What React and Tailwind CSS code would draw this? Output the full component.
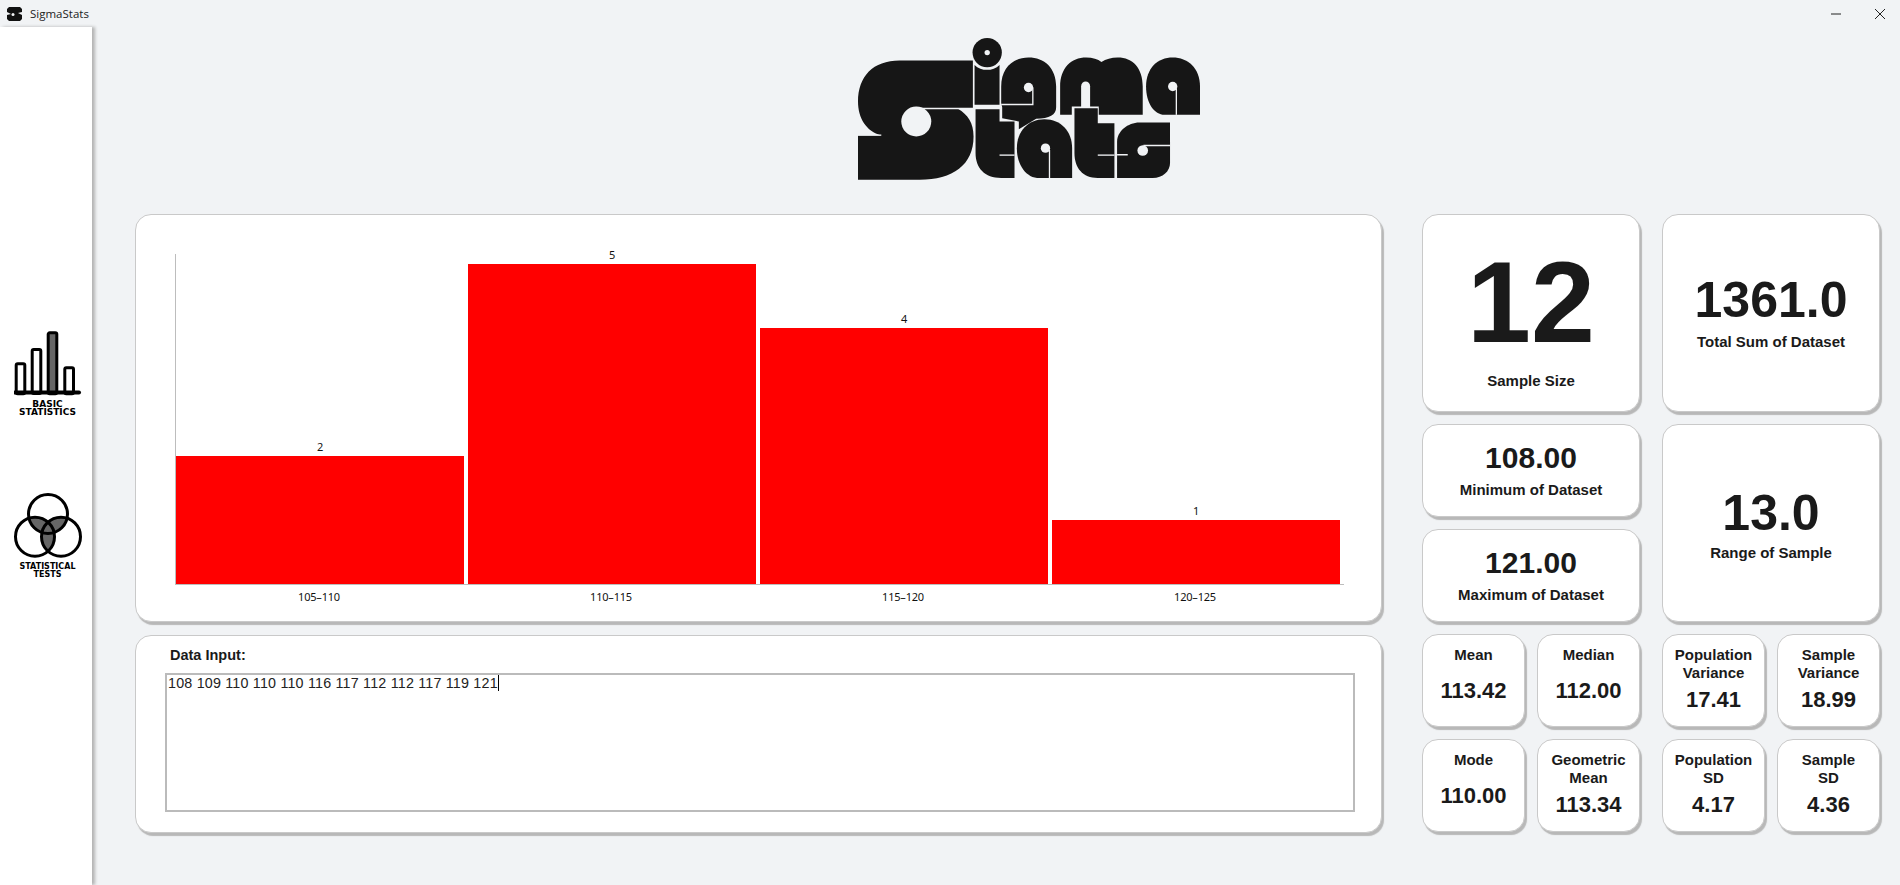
const bins = [
  { range: "105–110", count: 2 },
  { range: "110–115", count: 5 },
  { range: "115–120", count: 4 },
  { range: "120–125", count: 1 },
];
const UNIT = 64;

function Logo() {
  const ink = "#161616";
  const bg = "#f1f3f5";
  return (
    <svg viewBox="115 52 1027 428" width="342" height="143" className="block">
      {/* S */}
      <path fill={ink} d="M460 122H240C160 122 115 170 115 245C115 295 140 335 185 347H115V480H300C400 480 462 435 462 350C462 310 445 285 415 267H460Z" />
      <circle cx="290" cy="305" r="45" fill={bg} />
      <path stroke={bg} strokeWidth="4" fill="none" d="M115 346H185M300 266H462" />
      {/* i */}
      <path fill={ink} d="M465 135C485 155 520 155 540 135V255H465Z" />
      <circle cx="503" cy="98" r="44" fill={ink} />
      <circle cx="503" cy="98" r="8" fill={bg} />
      {/* g */}
      <path fill={ink} d="M545 200C545 145 580 113 627 113C675 113 710 145 710 200V262C710 285 690 295 650 297L598 328V305L548 295V262L545 250Z" />
      <circle cx="627" cy="203" r="14" fill={bg} />
      <path stroke={bg} strokeWidth="4" fill="none" d="M640 203V254H545" />
      {/* m */}
      <path fill={ink} d="M722 285V200C722 145 755 113 800 113C820 113 835 118 846 126C860 118 875 113 895 113C940 113 970 145 970 200V285H838V260H757V285Z" />
      <path fill={bg} d="M785 262V199C785 180 812 180 812 199V262Z" />
      {/* a */}
      <path fill={ink} d="M980 200C980 145 1015 113 1060 113C1105 113 1142 145 1142 200V285H1035C1005 285 980 250 980 200Z" />
      <circle cx="1060" cy="200" r="14" fill={bg} />
      <path stroke={bg} strokeWidth="4" fill="none" d="M1071 205V285" />
      {/* t */}
      <path fill={ink} d="M468 268H540V305H585V475H545C495 475 468 445 468 400Z" />
      <path stroke={bg} strokeWidth="4" fill="none" d="M540 406H585" />
      {/* a */}
      <path fill={ink} d="M592 385C592 335 625 298 675 298C725 298 758 335 758 385V475H660C620 475 592 435 592 385Z" />
      <circle cx="678" cy="385" r="14" fill={bg} />
      <path stroke={bg} strokeWidth="4" fill="none" d="M690 390V475" />
      {/* t */}
      <path fill={ink} d="M765 265H835V310H885V475H835C790 475 765 445 765 400Z" />
      <path stroke={bg} strokeWidth="4" fill="none" d="M835 406H885" />
      {/* s */}
      <path fill={ink} d="M893 365C893 335 925 308 960 308H1052V430C1052 455 1030 475 1000 475H893Z" />
      <circle cx="970" cy="392" r="16" fill={bg} />
      <path stroke={bg} strokeWidth="4" fill="none" d="M972 377H1052M893 405H925" />
    </svg>
  );
}

function BarsIcon() {
  return (
    <svg width="68" height="66" viewBox="0 0 68 66" fill="none" stroke="#000" strokeWidth="3">
      <rect x="2.2" y="33.8" width="8.6" height="30" rx="1.5" fill="#fff" />
      <rect x="18.2" y="19.5" width="8.6" height="44" rx="1.5" fill="#fff" />
      <rect x="34.2" y="2.8" width="8.6" height="61" rx="1.5" fill="#666" />
      <rect x="50.8" y="37.8" width="8.7" height="26" rx="1.5" fill="#fff" />
      <path d="M1 62.5H65" strokeWidth="4" strokeLinecap="round" />
    </svg>
  );
}

function VennIcon() {
  return (
    <svg width="68" height="66" viewBox="0 0 68 66" fill="none" stroke="#000" strokeWidth="3">
      <defs>
        <clipPath id="top"><circle cx="34" cy="21" r="19.5" /></clipPath>
        <clipPath id="left"><circle cx="21" cy="43.7" r="19.5" /></clipPath>
      </defs>
      <g stroke="none" fill="#666">
        <circle cx="21" cy="43.7" r="19.5" clipPath="url(#top)" />
        <circle cx="47" cy="43.7" r="19.5" clipPath="url(#top)" />
        <circle cx="47" cy="43.7" r="19.5" clipPath="url(#left)" />
      </g>
      <circle cx="34" cy="21" r="19.5" />
      <circle cx="21" cy="43.7" r="19.5" />
      <circle cx="47" cy="43.7" r="19.5" />
    </svg>
  );
}

function SideButton({ icon, lines, size }) {
  return (
    <button className="flex flex-col items-center">
      {icon}
      <span className={`${size} mt-[4px] leading-[8px] font-bold text-black font-['DejaVu_Sans',sans-serif] text-center`}>
        {lines.map((l) => (
          <span key={l} className="block">{l}</span>
        ))}
      </span>
    </button>
  );
}

const card = "bg-white border border-[#c9c9c9] rounded-[16px] shadow-[2px_3px_1px_#b8b8b8]";

function StatCard({ value, label, valueClass, className = "h-[93px]", gap = "mt-[8px]" }) {
  return (
    <div className={`${card} ${className} flex flex-col items-center justify-center`}>
      <div className={`${valueClass} font-bold leading-none`}>{value}</div>
      <div className={`${gap} text-[15px] leading-[18px] font-bold`}>{label}</div>
    </div>
  );
}

function SmallCard({ label, value }) {
  const twoLines = Array.isArray(label);
  return (
    <div className={`${card} h-[93px] w-[103px] flex flex-col items-center pt-[11px]`}>
      <div className="text-[15px] leading-[18px] font-bold text-center">
        {twoLines ? label.map((l) => <div key={l}>{l}</div>) : label}
      </div>
      <div className={`${twoLines ? "mt-[5px]" : "mt-[14px]"} text-[22px] leading-[26px] font-bold`}>{value}</div>
    </div>
  );
}

export default function App() {
  return (
    <div className="h-screen overflow-hidden bg-[#f1f3f5] text-[#1a1a1a] font-['Liberation_Sans',Arial,sans-serif] flex flex-col">
      {/* Title bar */}
      <div className="h-[27px] shrink-0 flex items-center pl-[7px] pr-[15px]">
        <svg width="15" height="14" viewBox="0 0 15 14">
          <path d="M2 0H13L15 2V5L11 6L15 8V12L13 14H2L0 12V8L4 7L0 5V2Z" fill="#111" />
          <circle cx="6" cy="7.5" r="1.5" fill="#f1f3f5" />
        </svg>
        <span className="ml-[8px] text-[11.5px] font-['Open_Sans',sans-serif] text-[#222]">SigmaStats</span>
        <div className="ml-auto flex items-center gap-[34px]">
          <svg width="10" height="10" viewBox="0 0 10 10"><path d="M0 5H10" stroke="#222" strokeWidth="1" /></svg>
          <svg width="10" height="10" viewBox="0 0 10 10"><path d="M0 0L10 10M10 0L0 10" stroke="#222" strokeWidth="1" /></svg>
        </div>
      </div>

      <div className="flex-1 flex min-h-0">
        {/* Sidebar */}
        <aside className="w-[92px] shrink-0 bg-white shadow-[3px_0_3px_#b4b4b4] flex flex-col items-center justify-center gap-[77px] pb-[3px] pl-[3px]">
          <SideButton icon={<BarsIcon />} lines={["BASIC", "STATISTICS"]} size="text-[9px]" />
          <SideButton icon={<VennIcon />} lines={["STATISTICAL", "TESTS"]} size="text-[8px]" />
        </aside>

        <main className="flex-1 pl-[43px] pr-[20px]">
          <div className="flex justify-center pl-[43px] pt-[10px] mb-[34px]">
            <Logo />
          </div>

          <div className="flex gap-[40px]">
            {/* Left column */}
            <div className="w-[1247px] flex flex-col gap-[13px]">
              <div className={`${card} h-[408px] pl-[39px] pt-[39px]`}>
                <div className="w-[1169px] h-[331px] border-l border-b border-[#bdbdbd] flex items-end gap-[4px]">
                  {bins.map((b) => (
                    <div key={b.range} className="w-[288px] flex flex-col items-center">
                      <span className="text-[11px] leading-[14px] tracking-[-0.2px] text-[#111] font-['Noto_Sans',sans-serif] mb-[2px]">{b.count}</span>
                      <div className="w-full bg-[#ff0000]" style={{ height: b.count * UNIT }} />
                    </div>
                  ))}
                </div>
                <div className="flex gap-[4px] mt-[5px]">
                  {bins.map((b) => (
                    <span key={b.range} className="w-[288px] text-center text-[11px] leading-[14px] tracking-[-0.2px] text-[#111] font-['Noto_Sans',sans-serif]">{b.range}</span>
                  ))}
                </div>
              </div>

              <div className={`${card} h-[198px] pl-[29px] pt-[10px]`}>
                <div className="pl-[5px] text-[14.5px] leading-[18px] font-bold">Data Input:</div>
                <div className="mt-[9px] w-[1190px] h-[139px] border-2 border-[#bbbbbb] pl-[1px] text-[14.3px] tracking-[0.2px] leading-[17px] text-[#222]">
                  108 109 110 110 110 116 117 112 112 117 119 121
                  <span className="inline-block w-[1px] h-[16px] bg-black align-top" />
                </div>
              </div>
            </div>

            {/* Right column */}
            <div className="w-[458px] grid grid-cols-2 gap-x-[22px]">
              <div className="flex flex-col gap-[12px]">
                <StatCard value="12" label="Sample Size" valueClass="text-[115px]" className="h-[198px] pt-[8px]" gap="mt-[12px]" />
                <StatCard value="108.00" label="Minimum of Dataset" valueClass="text-[30px]" className="h-[93px] pt-[1px]" />
                <StatCard value="121.00" label="Maximum of Dataset" valueClass="text-[30px]" className="h-[93px] pt-[1px]" />
                <div className="grid grid-cols-2 gap-x-[12px] gap-y-[12px]">
                  <SmallCard label="Mean" value="113.42" />
                  <SmallCard label="Median" value="112.00" />
                  <SmallCard label="Mode" value="110.00" />
                  <SmallCard label={["Geometric", "Mean"]} value="113.34" />
                </div>
              </div>
              <div className="flex flex-col gap-[12px]">
                <StatCard value="1361.0" label="Total Sum of Dataset" valueClass="text-[50px]" className="h-[198px]" />
                <StatCard value="13.0" label="Range of Sample" valueClass="text-[50px]" className="h-[198px] pt-[4px]" gap="mt-[6px]" />
                <div className="grid grid-cols-2 gap-x-[12px] gap-y-[12px]">
                  <SmallCard label={["Population", "Variance"]} value="17.41" />
                  <SmallCard label={["Sample", "Variance"]} value="18.99" />
                  <SmallCard label={["Population", "SD"]} value="4.17" />
                  <SmallCard label={["Sample", "SD"]} value="4.36" />
                </div>
              </div>
            </div>
          </div>
        </main>
      </div>
    </div>
  );
}
